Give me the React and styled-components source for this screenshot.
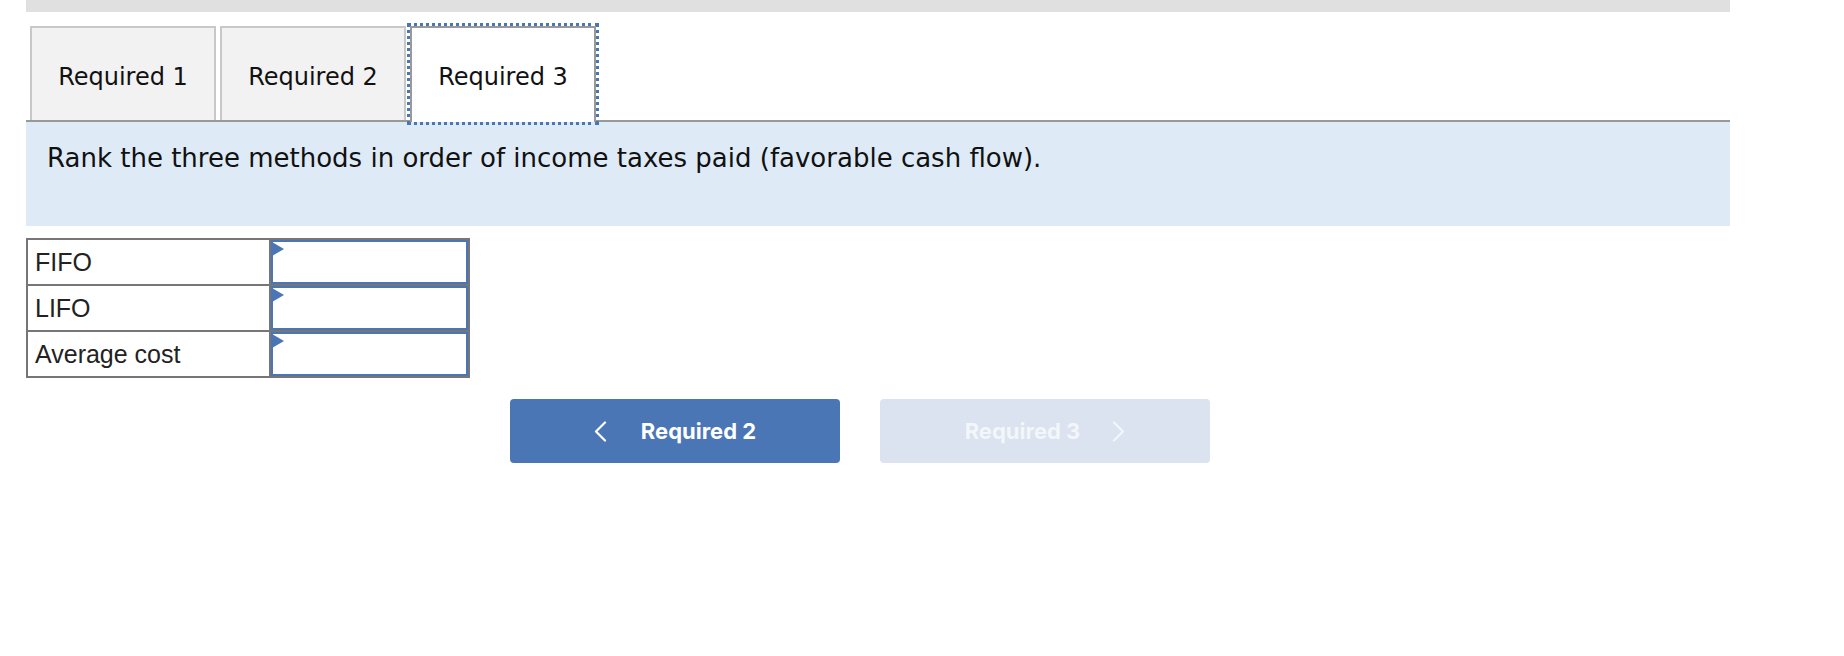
import React from "react";
import styled, { createGlobalStyle } from "styled-components";

const GlobalStyle = createGlobalStyle`
  body {
    margin: 0;
    background: #ffffff;
    font-family: "DejaVu Sans", Verdana, sans-serif;
  }
`;

const Page = styled.div`
  width: 1704px;
  margin-left: 26px;
`;

const TopBar = styled.div`
  height: 12px;
  background: #e0e0e0;
`;

const TabStrip = styled.div`
  display: flex;
  align-items: flex-end;
  gap: 4px;
  margin-top: 14px;
  padding-left: 4px;
  border-bottom: 2px solid #999999;
`;

const Tab = styled.button`
  box-sizing: border-box;
  width: 186px;
  height: ${p => (p.active ? "96px" : "94px")};
  margin-bottom: ${p => (p.active ? "-2px" : "0")};
  padding: ${p => (p.active ? "4px 0 0" : "5px 0 0")};
  display: flex;
  align-items: center;
  justify-content: center;
  background: ${p => (p.active ? "#ffffff" : "#f2f2f2")};
  border: 2px solid ${p => (p.active ? "#999999" : "#c8c8c8")};
  border-bottom: none;
  outline: ${p => (p.active ? "3px dotted #4a76b5" : "none")};
  outline-offset: 0;
  font-family: "DejaVu Sans", Verdana, sans-serif;
  font-size: 24px;
  color: #111111;
  cursor: pointer;
`;

const Prompt = styled.div`
  box-sizing: border-box;
  height: 104px;
  padding: 21px 21px 0;
  background: #deebf7;
  font-size: 26px;
  color: #111111;
`;

const RankTable = styled.table`
  margin-top: 12px;
  border-collapse: collapse;
  border: 2px solid #767676;
`;

const LabelCell = styled.td`
  box-sizing: border-box;
  width: 243px;
  height: 46px;
  padding: 0 7px;
  border: 2px solid #767676;
  font-family: "Liberation Sans", Arial, sans-serif;
  font-size: 25px;
  color: #222222;
`;

const InputCell = styled.td`
  width: 197px;
  padding: 0;
  border: 2px solid #767676;
`;

const SelectBox = styled.div`
  position: relative;
  box-sizing: border-box;
  height: 44px;
  border: 2px solid #4a76b5;
  background: #ffffff;

  &::before {
    content: "";
    position: absolute;
    left: -1px;
    top: 0;
    width: 0;
    height: 0;
    border-left: 12px solid #4a76b5;
    border-top: 7px solid transparent;
    border-bottom: 7px solid transparent;
  }
`;

const NavRow = styled.div`
  display: flex;
  gap: 40px;
  margin-top: 21px;
  padding-left: 484px;
`;

const NavButton = styled.button`
  box-sizing: border-box;
  width: 330px;
  height: 64px;
  display: flex;
  align-items: center;
  justify-content: center;
  gap: ${p => (p.disabled ? "32px" : "34px")};
  border: none;
  border-radius: 4px;
  background: ${p => (p.disabled ? "#dae3ef" : "#4a76b5")};
  color: ${p => (p.disabled ? "#f3f6fa" : "#ffffff")};
  font-family: Inter, Roboto, "Liberation Sans", sans-serif;
  font-weight: 700;
  font-size: 22px;
  cursor: ${p => (p.disabled ? "default" : "pointer")};
`;

const Chevron = ({ dir }) => (
  <svg width="13" height="21" viewBox="0 0 13 21" fill="none">
    <path
      d={dir === "left" ? "M11 1.5 L2 10.5 L11 19.5" : "M2 1.5 L11 10.5 L2 19.5"}
      stroke="currentColor"
      strokeWidth="2.2"
      strokeLinecap="round"
      strokeLinejoin="round"
    />
  </svg>
);

const rows = ["FIFO", "LIFO", "Average cost"];

export default function App() {
  return (
    <Page>
      <GlobalStyle />
      <TopBar />
      <TabStrip>
        <Tab>Required 1</Tab>
        <Tab>Required 2</Tab>
        <Tab active>Required 3</Tab>
      </TabStrip>
      <Prompt>
        Rank the three methods in order of income taxes paid (favorable cash
        flow).
      </Prompt>
      <RankTable>
        <tbody>
          {rows.map(r => (
            <tr key={r}>
              <LabelCell>{r}</LabelCell>
              <InputCell>
                <SelectBox />
              </InputCell>
            </tr>
          ))}
        </tbody>
      </RankTable>
      <NavRow>
        <NavButton>
          <Chevron dir="left" />
          Required 2
        </NavButton>
        <NavButton disabled>
          Required 3
          <Chevron dir="right" />
        </NavButton>
      </NavRow>
    </Page>
  );
}
